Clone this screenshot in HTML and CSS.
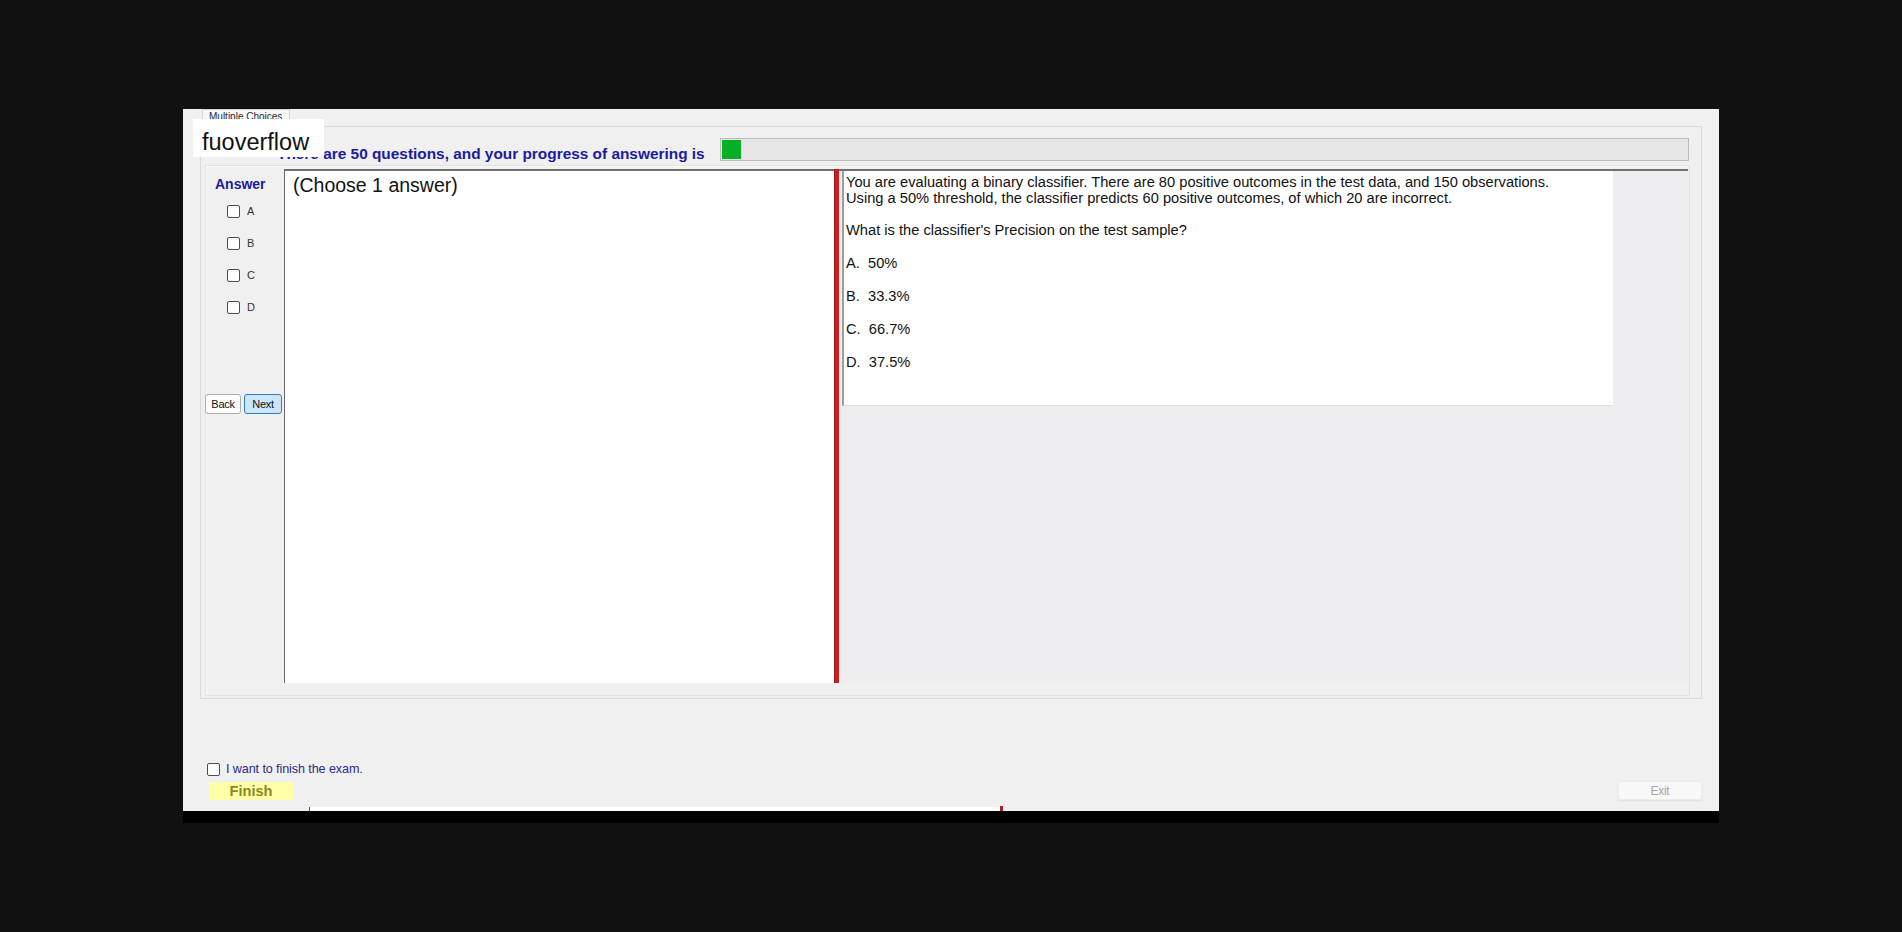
FILE: index.html
```html
<!DOCTYPE html>
<html lang="en">
<head>
<meta charset="utf-8">
<title>Multiple Choices</title>
<link rel="stylesheet" href="styles.css">
</head>
<body>
<div class="screen">
  <div class="window">
    <div class="tabstrip"><div class="tab">Multiple Choices</div></div>
    <div class="page">
      <div class="header">
        <div class="header-text">There are 50 questions, and your progress of answering is</div>
        <div class="progress"><div class="progress-fill" style="width:19px"></div></div>
      </div>
      <div class="group">
        <div class="answers">
          <div class="answers-title">Answer</div>
          <ul class="choices">
            <li class="choice"><span class="box"></span><span class="choice-label">A</span></li>
            <li class="choice"><span class="box"></span><span class="choice-label">B</span></li>
            <li class="choice"><span class="box"></span><span class="choice-label">C</span></li>
            <li class="choice"><span class="box"></span><span class="choice-label">D</span></li>
          </ul>
          <div class="nav"><button class="btn">Back</button><button class="btn btn-next">Next</button></div>
        </div>
        <div class="content">
          <div class="answer-pane">(Choose 1 answer)</div>
          <div class="splitter"></div>
          <div class="question-area">
            <div class="question-box">
              <p class="stem">You are evaluating a binary classifier. There are 80 positive outcomes in the test data, and 150 observations.<br>Using a 50% threshold, the classifier predicts 60 positive outcomes, of which 20 are incorrect.</p>
              <p class="ask">What is the classifier's Precision on the test sample?</p>
              <p class="opt">A.  50%</p>
              <p class="opt">B.  33.3%</p>
              <p class="opt">C.  66.7%</p>
              <p class="opt">D.  37.5%</p>
            </div>
          </div>
        </div>
      </div>
    </div>
    <div class="footer">
      <div class="finish-col">
        <div class="finish-check"><span class="box"></span><span class="finish-text">I want to finish the exam.</span></div>
        <button class="btn-finish">Finish</button>
      </div>
      <button class="btn-exit">Exit</button>
    </div>
    <div class="scrollstrip"><div class="strip"><span class="strip-end"></span></div></div>
    <div class="watermark">fuoverflow</div>
  </div>
  <div class="blackbar"></div>
</div>
</body>
</html>
```
FILE: styles.css
```css
html, body {
  margin: 0;
  padding: 0;
}
body {
  background: #111111;
  font-family: "Liberation Sans", Arial, sans-serif;
  color: #111;
}
.screen {
  width: 1902px;
  height: 932px;
  box-sizing: border-box;
  padding: 109px 0 0 183px;
  overflow: hidden;
}
.window {
  position: relative;
  width: 1536px;
  height: 702px;
  background: #f0f0f0;
  display: flex;
  flex-direction: column;
}
.tabstrip {
  height: 17px;
  padding-left: 19px;
  display: flex;
  flex: none;
}
.tab {
  width: 88px;
  height: 18px;
  box-sizing: border-box;
  border: 1px solid #d6d6d6;
  border-bottom: none;
  background: #f7f7f7;
  font-size: 10px;
  line-height: 14px;
  padding-left: 6px;
  color: #2a2a2a;
  white-space: nowrap;
  position: relative;
  z-index: 1;
}
.page {
  margin-left: 17px;
  width: 1502px;
  height: 573px;
  flex: none;
  box-sizing: border-box;
  border: 1px solid #dadada;
  background: #f0f0f0;
}
.header {
  height: 38px;
  box-sizing: border-box;
  padding: 11px 12px 0 76px;
  display: flex;
  align-items: flex-start;
}
.header-text {
  font-size: 15.4px;
  font-weight: bold;
  line-height: 17px;
  margin-top: 6.5px;
  color: #1b1ba0;
  white-space: nowrap;
}
.progress {
  margin-left: auto;
  width: 969px;
  height: 23px;
  box-sizing: border-box;
  border: 1px solid #bcbcbc;
  background: #e6e6e6;
  padding: 1px;
}
.progress-fill {
  height: 100%;
  background: #06b025;
}
.group {
  margin-left: 4px;
  width: 1485px;
  height: 531px;
  box-sizing: border-box;
  border: 1px solid #e2e2e2;
  box-shadow: inset 1px 1px 0 #fafafa;
  display: flex;
  align-items: flex-start;
}
.answers {
  width: 78px;
  flex: none;
  box-sizing: border-box;
  padding-top: 9px;
}
.answers-title {
  font-size: 14px;
  font-weight: bold;
  line-height: 18px;
  padding-left: 9px;
  color: #1b1b9c;
}
.choices {
  list-style: none;
  margin: 2px 0 0;
  padding: 0;
}
.choice {
  height: 32px;
  display: flex;
  align-items: center;
  padding-left: 21px;
}
.box {
  width: 13px;
  height: 13px;
  box-sizing: border-box;
  border: 1px solid #4d4d4d;
  border-radius: 2px;
  background: #fff;
  flex: none;
}
.choice-label {
  margin-left: 7px;
  font-size: 11px;
  color: #333;
}
.nav {
  margin-top: 71px;
  margin-left: -1px;
  display: flex;
}
.btn {
  width: 36px;
  height: 20px;
  padding: 0;
  box-sizing: border-box;
  border: 1px solid #adadad;
  border-radius: 3px;
  background: #fdfdfd;
  font-family: "Liberation Sans", Arial, sans-serif;
  font-size: 11px;
  letter-spacing: -0.3px;
  color: #111;
}
.btn-next {
  width: 38px;
  margin-left: 3px;
  background: #cde6f7;
  border-color: #2c7fc0;
}
.content {
  margin-top: 3px;
  width: 1404px;
  height: 514px;
  flex: none;
  box-sizing: border-box;
  border-top: 2px solid #707070;
  display: flex;
}
.answer-pane {
  width: 550px;
  flex: none;
  box-sizing: border-box;
  border-left: 1px solid #6a6a6a;
  background: #fff;
  padding: 3px 8px;
  font-size: 19.5px;
  line-height: 22px;
  color: #111;
}
.splitter {
  width: 5px;
  flex: none;
  margin-top: -2px;
  background: #cf1c1c;
  box-shadow: inset 1px 0 0 #a51515;
}
.question-area {
  flex: 1;
  background: #eeeef0;
  padding-left: 3px;
}
.question-box {
  width: 771px;
  height: 235px;
  box-sizing: border-box;
  background: #fff;
  border-left: 2px solid #9d9d9d;
  border-bottom: 1px solid #dedede;
  padding: 3px 0 0 2px;
  font-size: 14.67px;
  line-height: 16px;
  color: #111;
}
.question-box p {
  margin: 0;
  white-space: pre-wrap;
}
.question-box .ask {
  margin-top: 16px;
}
.question-box .opt {
  margin-top: 17px;
}
.footer {
  height: 102px;
  flex: none;
  box-sizing: border-box;
  padding: 0 17px 1px 24px;
  display: flex;
  justify-content: space-between;
  align-items: flex-end;
}
.finish-col {
  display: flex;
  flex-direction: column;
}
.finish-check {
  height: 16px;
  display: flex;
  align-items: center;
}
.finish-text {
  margin-left: 6px;
  font-size: 12.6px;
  color: #2b2b8c;
  letter-spacing: -0.1px;
}
.btn-finish {
  margin-top: 5px;
  margin-left: 2px;
  width: 84px;
  height: 18px;
  padding: 0;
  border: none;
  background: #ffffa8;
  font-family: "Liberation Sans", Arial, sans-serif;
  font-size: 14.6px;
  font-weight: bold;
  line-height: 19px;
  color: #8a8a22;
}
.btn-exit {
  width: 84px;
  height: 19px;
  padding: 0;
  box-sizing: border-box;
  border: 1px solid #ececec;
  border-radius: 2px;
  background: #f8f8f8;
  box-shadow: 0 1px 2px rgba(0, 0, 0, 0.08);
  font-family: "Liberation Sans", Arial, sans-serif;
  font-size: 12px;
  letter-spacing: -0.3px;
  color: #a6a6a6;
}
.scrollstrip {
  height: 10px;
  flex: none;
  display: flex;
  align-items: flex-end;
  padding-left: 126px;
}
.strip {
  position: relative;
  width: 693px;
  height: 4px;
  background: #fff;
  border-left: 1px solid #555;
}
.strip-end {
  position: absolute;
  right: 0;
  top: -1px;
  width: 3px;
  height: 5px;
  background: #b01c2c;
}
.watermark {
  position: absolute;
  left: 10px;
  top: 10px;
  width: 131px;
  height: 38px;
  box-sizing: border-box;
  padding: 8px 0 0 9px;
  background: #fff;
  font-size: 23.5px;
  line-height: 30px;
  color: #111;
  z-index: 2;
}
.blackbar {
  width: 1536px;
  height: 12px;
  background: #000;
}
```
